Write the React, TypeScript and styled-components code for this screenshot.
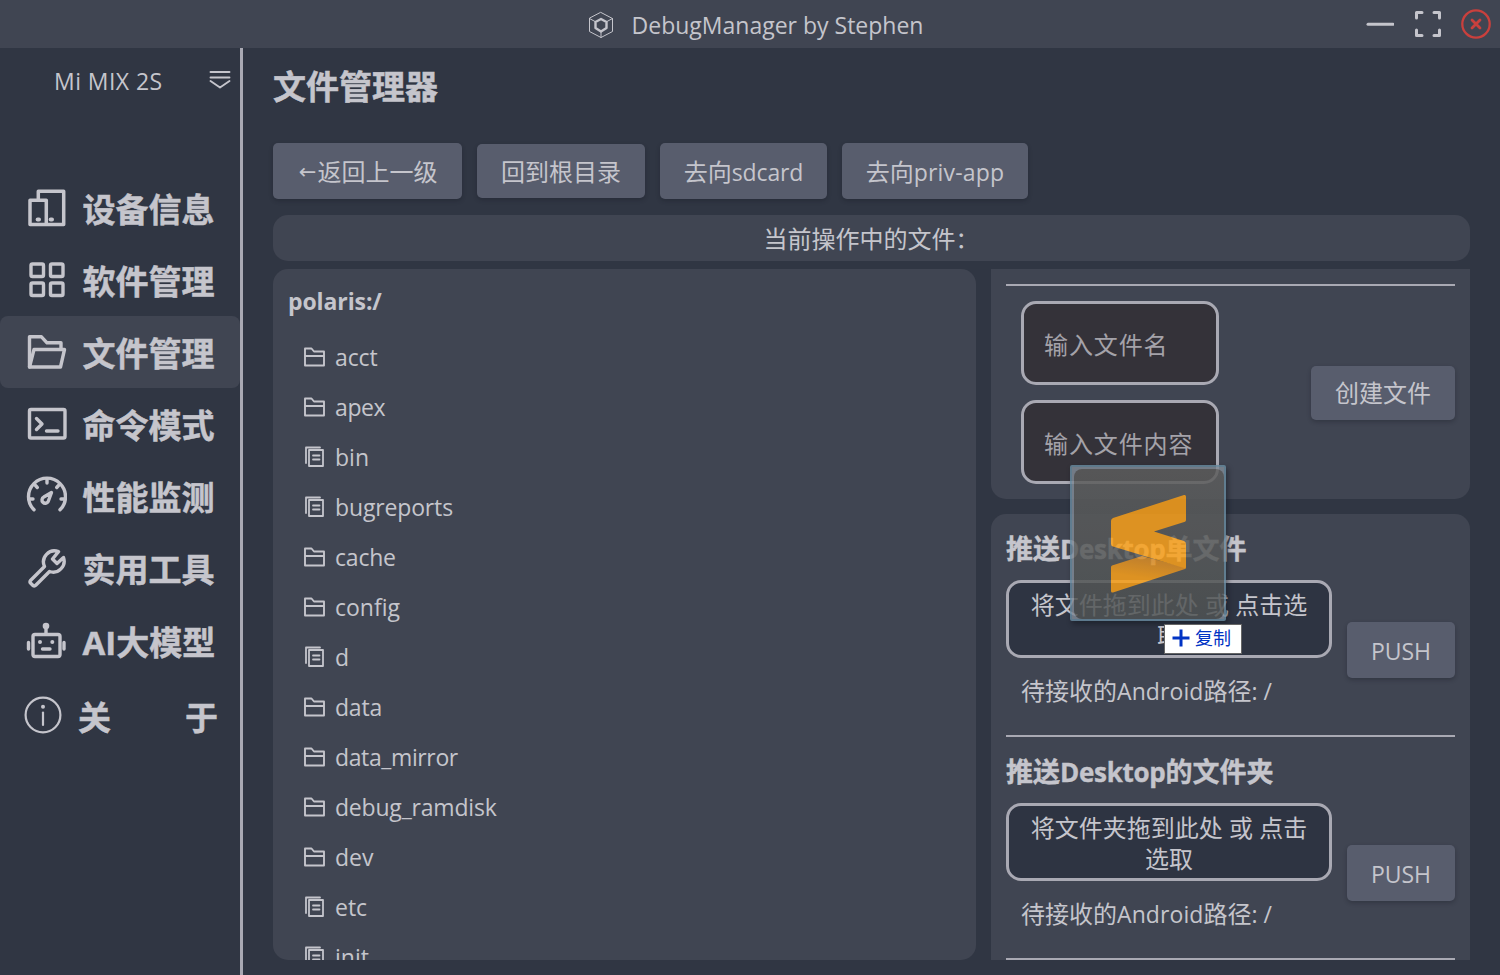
import React from "react";
import styled, { createGlobalStyle, css } from "styled-components";

const color = {
  base: "#303643",
  surface: "#404552",
  raised: "#585d6d",
  text: "#c5c5cc",
  line: "#a9a9b3",
  danger: "#c9403d",
};

const Global = createGlobalStyle`
  * { box-sizing: border-box; }
  body {
    margin: 0;
    background: ${color.base};
    color: ${color.text};
    font-family: "Open Sans", "Noto Sans CJK SC", sans-serif;
    font-size: 24px;
    overflow: hidden;
  }
`;

const Window = styled.div`
  width: 1500px;
  height: 975px;
  display: flex;
  flex-direction: column;
  background: ${color.base};
  overflow: hidden;
`;

const TitleBar = styled.header`
  height: 48px;
  flex: none;
  display: grid;
  grid-template-columns: 1fr auto 1fr;
  align-items: center;
  background: ${color.surface};
`;

const Brand = styled.div`
  grid-column: 2;
  display: flex;
  align-items: center;
  gap: 18px;
  padding: 2px 0 0 11px;
  line-height: 44px;
`;

const Latin = styled.span<{ $size?: number; $track?: number }>`
  font-size: ${(p) => p.$size ?? 23}px;
  letter-spacing: ${(p) => p.$track ?? 0}px;
  line-height: 0;
  white-space: pre;
`;

const WindowControls = styled.div`
  display: flex;
  justify-content: flex-end;
  align-items: center;
  gap: 18px;
  padding-right: 8px;
`;

const Body = styled.div`
  flex: 1;
  min-height: 0;
  display: flex;
`;

const Sidebar = styled.nav`
  width: 243px;
  flex: none;
  border-right: 3px solid ${color.line};
`;

const DevicePicker = styled.div`
  height: 124px;
  padding: 15px 9px 0 54px;
  display: flex;
  justify-content: space-between;
  align-items: flex-start;
  line-height: 36px;
  svg { margin-top: 6px; }
`;

const NavItem = styled.div<{ $active?: boolean; $height?: number; $wide?: boolean }>`
  height: ${(p) => p.$height ?? 72}px;
  display: flex;
  align-items: center;
  gap: ${(p) => (p.$wide ? 14 : 15.5)}px;
  padding-top: 4px;
  padding-left: ${(p) => (p.$wide ? 22 : 25)}px;
  border-radius: 8px;
  font-size: 33px;
  font-weight: 700;
  -webkit-text-stroke: 0.5px currentColor;
  line-height: 44px;
  white-space: pre;
  background: ${(p) => (p.$active ? color.surface : "transparent")};
  svg { margin-bottom: 4px; flex: none; }
`;

const Spread = styled.span`
  width: 140px;
  display: flex;
  justify-content: space-between;
`;

const Main = styled.main`
  flex: 1;
  min-width: 0;
  padding: 0 30px 15px;
  display: flex;
  flex-direction: column;
`;

const PageTitle = styled.h1`
  margin: 0;
  height: 95px;
  padding-top: 17px;
  font-size: 33px;
  line-height: 44px;
  font-weight: 700;
  -webkit-text-stroke: 0.5px currentColor;
`;

const Toolbar = styled.div`
  height: 56px;
  display: flex;
  align-items: center;
  gap: 15px;
`;

const Button = styled.button<{ $w: number; $h?: number }>`
  width: ${(p) => p.$w}px;
  height: ${(p) => p.$h ?? 56}px;
  flex: none;
  padding: 1px 0 0;
  border: 0;
  border-radius: 5px;
  display: flex;
  align-items: center;
  justify-content: center;
  font: inherit;
  line-height: 36px;
  color: ${color.text};
  background: ${color.raised};
  box-shadow: 0 2px 4px rgba(20, 24, 34, 0.3);
  white-space: nowrap;
`;

const Arrow = styled.span`
  width: 20px;
  font-family: "DejaVu Sans", sans-serif;
  font-size: 21px;
`;

const StatusBar = styled.div`
  height: 46px;
  margin-top: 16px;
  flex: none;
  border-radius: 15px;
  background: ${color.surface};
  text-align: center;
  line-height: 47px;
  padding-right: 1px;
`;

const Columns = styled.div`
  flex: 1;
  min-height: 0;
  margin-top: 8px;
  display: grid;
  grid-template-columns: 703px 479px;
  gap: 15px;
`;

const FilePanel = styled.section`
  min-height: 0;
  overflow: hidden;
  border-radius: 15px;
  background: ${color.surface};
`;

const PathTitle = styled.h2`
  margin: 0;
  height: 63px;
  padding: 14px 15px 0;
  font-size: 24px;
  line-height: 36px;
`;

const FileRow = styled.div`
  height: 50px;
  padding: 0 0 0 30px;
  display: flex;
  align-items: center;
  gap: 8px;
  line-height: 50px;
  svg { flex: none; margin-bottom: 1px; }
`;

const SideColumn = styled.div`
  min-height: 0;
  overflow: hidden;
  display: flex;
  flex-direction: column;
  gap: 15px;
`;

const Card = styled.section<{ $continued?: boolean }>`
  flex: none;
  background: ${color.surface};
  ${(p) =>
    p.$continued
      ? css`
          height: 230px;
          padding: 15px 15px 0;
          border-radius: 0 0 15px 15px;
        `
      : css`
          padding: 0 15px 40px;
          border-radius: 15px 15px 0 0;
        `}
`;

const Divider = styled.hr`
  height: 2px;
  margin: 0;
  border: 0;
  background: ${color.line};
`;

const CreateRow = styled.div`
  display: flex;
  justify-content: space-between;
  align-items: center;
  padding: 15px 0 0 15px;
`;

const Fields = styled.div`
  display: flex;
  flex-direction: column;
  gap: 15px;
`;

const Field = styled.input`
  width: 198px;
  height: 84px;
  padding: 3px 0 0 20px;
  border: 3px solid ${color.line};
  border-radius: 15px;
  outline: 0;
  background: #343239;
  font: inherit;
  letter-spacing: 0.9px;
  &::placeholder { color: #a4a2a9; opacity: 1; }
`;

const PushTitle = styled.h3`
  margin: 0;
  height: 66px;
  padding-top: 17px;
  font-size: 27px;
  line-height: 36px;
  font-weight: 700;
  -webkit-text-stroke: 0.4px currentColor;
`;

const PushBody = styled.div`
  height: 155px;
  display: flex;
  gap: 15px;
`;

const PushLeft = styled.div`
  width: 326px;
`;

const DropZone = styled.div`
  height: 78px;
  padding: 6px 15px 0;
  border: 3px solid ${color.line};
  border-radius: 15px;
  background: #2e3442;
  text-align: center;
  line-height: 31px;
  white-space: pre-line;
`;

const TargetPath = styled.div`
  padding: 15px 0 0 15px;
  line-height: 36px;
  white-space: nowrap;
`;

const PushAction = styled.div`
  padding-top: 42px;
`;

const DragGhost = styled.div`
  position: absolute;
  left: 1070px;
  top: 465px;
  width: 156px;
  height: 156px;
  padding: 2px 0 0 2px;
  border: 2px solid #67889d;
  border-radius: 2px;
  background: #808995;
  box-shadow: 2px 3px 5px rgba(15, 18, 26, 0.55);
  opacity: 0.84;
`;

const GhostInner = styled.div`
  width: 150px;
  height: 150px;
  border-radius: 8px;
  background: linear-gradient(#5d5d5d, #505454);
  svg { display: block; }
`;

const CopyTip = styled.div`
  position: absolute;
  left: 1164px;
  top: 624px;
  width: 78px;
  height: 30px;
  padding: 0 0 2px 7px;
  display: flex;
  align-items: center;
  gap: 5px;
  border: 1px solid #666;
  background: #fff;
  color: #0033c4;
  font-size: 18px;
  line-height: 26px;
  white-space: nowrap;
`;

type StrokeProps = {
  w?: number;
  h?: number;
  sw?: number;
  children: React.ReactNode;
};

const Stroke = ({ w = 42, h = 42, sw = 3, children }: StrokeProps) => (
  <svg
    width={w}
    height={h}
    viewBox={`0 0 ${w} ${h}`}
    fill="none"
    stroke="currentColor"
    strokeWidth={sw}
    strokeLinejoin="round"
    strokeLinecap="round"
  >
    {children}
  </svg>
);

const DeviceIcon = () => (
  <Stroke sw={3.5}>
    <path d="M13.300 12V4.300H38.700V37.500H5V13.200H21.300V37.500" />
    <path d="M12.600 32.500h1.400M25.600 32.500h1.400" strokeWidth={4} />
  </Stroke>
);
const AppsIcon = () => (
  <Stroke sw={3.4}>
    <rect x="6" y="5" width="12.500" height="12.500" rx="1.500" />
    <rect x="25.500" y="5" width="12.500" height="12.500" rx="1.500" />
    <rect x="6" y="24" width="12.500" height="12.500" rx="1.500" />
    <rect x="25.500" y="24" width="12.500" height="12.500" rx="1.500" />
  </Stroke>
);
const FolderOpenIcon = () => (
  <Stroke sw={3.4}>
    <path d="M4.500 36V5.800H16.500L22 11.800H36V18" />
    <path d="M4.500 36L9 18.500H39.500L35.500 36Z" />
  </Stroke>
);
const TerminalIcon = () => (
  <Stroke sw={3.4}>
    <rect x="4.500" y="6.500" width="35.500" height="28.500" rx="1.500" />
    <path d="M11.500 15.500L17 21L11.500 26.500M21.500 28H33" />
  </Stroke>
);
const GaugeIcon = () => (
  <Stroke sw={3.4}>
    <path d="M9 34.800A18.500 18.500 0 1 1 35 34.800" />
    <path d="M22 4V8M10.500 10.500L12.300 12.500M33.500 10.500L31.700 12.500M4 24H8M36 24H40" />
    <path d="M26.500 17.500L18.800 22A3.300 3.300 0 1 0 23.200 26.500Z" />
  </Stroke>
);
const WrenchIcon = () => (
  <Stroke sw={3.4}>
    <path d="M33.500 4.700A11 11 0 0 0 19.500 19.500L5.500 33.500Q4.500 35 5.500 36L8 38.500Q9.500 39.500 11 38L24.500 24.500A11 11 0 0 0 38.500 10.500L32 16.500L27.500 12Z" />
  </Stroke>
);
const RobotIcon = () => (
  <Stroke sw={3.4}>
    <rect x="8" y="14.500" width="27" height="22" rx="2" />
    <path d="M21 7V14M3.500 22.500V29M39 22.500V29M17.500 29H25" />
    <circle cx="21" cy="6" r="3.300" fill="currentColor" stroke="none" />
    <circle cx="15" cy="22" r="2" fill="currentColor" stroke="none" />
    <circle cx="27.300" cy="22" r="2" fill="currentColor" stroke="none" />
  </Stroke>
);
const InfoIcon = () => (
  <Stroke sw={2.2}>
    <circle cx="21" cy="20" r="17.400" />
    <path d="M21 17.500V30" />
    <circle cx="21" cy="11.800" r="2" fill="currentColor" stroke="none" />
  </Stroke>
);

const FolderIcon = () => (
  <Stroke w={24} h={24} sw={1.9}>
    <path d="M2 20.500V3.500H8.500L11 6.500H21V20.500ZM2 11H21" />
  </Stroke>
);
const FileIcon = () => (
  <Stroke w={24} h={24} sw={1.8}>
    <path d="M3 18V2.500H17M6 5H20V21H6ZM10 10.500H16.500M10 14.500H16.500" />
  </Stroke>
);

const nav = [
  { label: "设备信息", Icon: DeviceIcon },
  { label: "软件管理", Icon: AppsIcon },
  { label: "文件管理", Icon: FolderOpenIcon, active: true },
  { label: "命令模式", Icon: TerminalIcon },
  { label: "性能监测", Icon: GaugeIcon },
  { label: "实用工具", Icon: WrenchIcon },
];

type Entry = { name: string; folder?: boolean; track?: number };

const files: Entry[] = [
  { name: "acct", folder: true, track: -0.1 },
  { name: "apex", folder: true, track: -0.4 },
  { name: "bin" },
  { name: "bugreports", track: -0.15 },
  { name: "cache", folder: true, track: -0.2 },
  { name: "config", folder: true },
  { name: "d" },
  { name: "data", folder: true, track: -0.2 },
  { name: "data_mirror", folder: true, track: -0.38 },
  { name: "debug_ramdisk", folder: true, track: -0.2 },
  { name: "dev", folder: true },
  { name: "etc" },
  { name: "init" },
];

const PushSection = ({ suffix, hint }: { suffix: string; hint: string }) => (
  <>
    <PushTitle>
      推送<Latin $size={26} $track={-0.3}>Desktop</Latin>
      {suffix}
    </PushTitle>
    <PushBody>
      <PushLeft>
        <DropZone>{hint}</DropZone>
        <TargetPath>
          待接收的<Latin $track={0.1}>Android</Latin>路径<Latin>: /</Latin>
        </TargetPath>
      </PushLeft>
      <PushAction>
        <Button $w={108}>
          <Latin>PUSH</Latin>
        </Button>
      </PushAction>
    </PushBody>
    <Divider />
  </>
);

export default function App() {
  return (
    <Window>
      <Global />
      <TitleBar>
        <Brand>
          <Stroke w={26} h={28} sw={1}>
            <path d="M13 1.500L24.500 7.500V20.500L13 26.500L1.500 20.500V7.500ZM1.500 7.500L7 10.500M24.500 7.500L19 10.500M13 21V26.500" />
            <path d="M13 8L18.500 11V17L13 20.500L7.500 17V11Z" strokeWidth={2.4} />
          </Stroke>
          <Latin>DebugManager by Stephen</Latin>
        </Brand>
        <WindowControls>
          <Stroke w={30} h={30}>
            <path d="M4 15.300H29" />
          </Stroke>
          <Stroke w={30} h={30}>
            <path d="M4.500 9V3.500H10M22 3.500H27.500V9M27.500 21V26.500H22M10 26.500H4.500V21" />
          </Stroke>
          <svg width="32" height="32" viewBox="0 0 32 32" fill="none" stroke={color.danger} strokeLinecap="round">
            <circle cx="16" cy="16" r="13.700" strokeWidth="2.300" />
            <path d="M12 12L20 20M20 12L12 20" strokeWidth="2.800" />
          </svg>
        </WindowControls>
      </TitleBar>
      <Body>
        <Sidebar>
          <DevicePicker>
            <div>
              <Latin $track={0.45}>Mi MIX 2S</Latin>
            </div>
            <Stroke w={22} h={22} sw={1.9}>
              <path d="M1.500 3H20.500M1.500 8.500H20.500M1.500 12L11 18.500L20.500 12" />
            </Stroke>
          </DevicePicker>
          {nav.map(({ label, Icon, active }) => (
            <NavItem key={label} $active={active}>
              <Icon />
              {label}
            </NavItem>
          ))}
          <NavItem $height={74}>
            <RobotIcon />
            <span>
              <Latin $size={33}>AI</Latin>大模型
            </span>
          </NavItem>
          <NavItem $height={76} $wide>
            <InfoIcon />
            <Spread>
              <span>关</span>
              <span>于</span>
            </Spread>
          </NavItem>
        </Sidebar>
        <Main>
          <PageTitle>文件管理器</PageTitle>
          <Toolbar>
            <Button $w={189}>
              <Arrow>←</Arrow>返回上一级
            </Button>
            <Button $w={168} $h={54}>
              回到根目录
            </Button>
            <Button $w={167}>
              去向<Latin $track={-0.15}>sdcard</Latin>
            </Button>
            <Button $w={186}>
              去向<Latin $track={0.15}>priv-app</Latin>
            </Button>
          </Toolbar>
          <StatusBar>
            当前操作中的文件<Latin>：</Latin>
          </StatusBar>
          <Columns>
            <FilePanel>
              <PathTitle>
                <Latin $track={-0.1}>polaris:/</Latin>
              </PathTitle>
              {files.map(({ name, folder, track }) => (
                <FileRow key={name}>
                  {folder ? <FolderIcon /> : <FileIcon />}
                  <Latin $track={track}>{name}</Latin>
                </FileRow>
              ))}
            </FilePanel>
            <SideColumn>
              <Card $continued>
                <Divider />
                <CreateRow>
                  <Fields>
                    <Field placeholder="输入文件名" />
                    <Field placeholder="输入文件内容" />
                  </Fields>
                  <Button $w={144} $h={54}>
                    创建文件
                  </Button>
                </CreateRow>
              </Card>
              <Card>
                <PushSection suffix="单文件" hint={"将文件拖到此处 或 点击选\n取"} />
                <PushSection suffix="的文件夹" hint={"将文件夹拖到此处 或 点击\n选取"} />
              </Card>
            </SideColumn>
          </Columns>
        </Main>
      </Body>
      <DragGhost>
        <GhostInner>
          <svg width="150" height="150" viewBox="0 0 150 150">
            <defs>
              <linearGradient id="fold" x1="0.45" y1="0.6" x2="0.6" y2="0.1">
                <stop offset="0" stopColor="#fba119" />
                <stop offset="1" stopColor="#d98c26" />
              </linearGradient>
            </defs>
            <path
              d="M37 98Q37 97 38 96.500L68 87L112 98.500Q112 99.500 111 100L39 123.500Q37 124 37 122Z"
              fill="url(#fold)"
            />
            <path
              d="M37 52Q37 50 39 49L110 26Q112 25.500 112 27.500V51Q112 52 111 52.700L80 62.500L110 72Q112 73 112 75V98Q112 100 110 99L39 77.500Q37 77 37 75Z"
              fill="#fba119"
            />
          </svg>
        </GhostInner>
      </DragGhost>
      <CopyTip>
        <svg width="18" height="18" viewBox="0 0 18 18" stroke="#0033c4" strokeWidth="3">
          <path d="M9 0.500V17.500M0.500 9H17.500" />
        </svg>
        复制
      </CopyTip>
    </Window>
  );
}
